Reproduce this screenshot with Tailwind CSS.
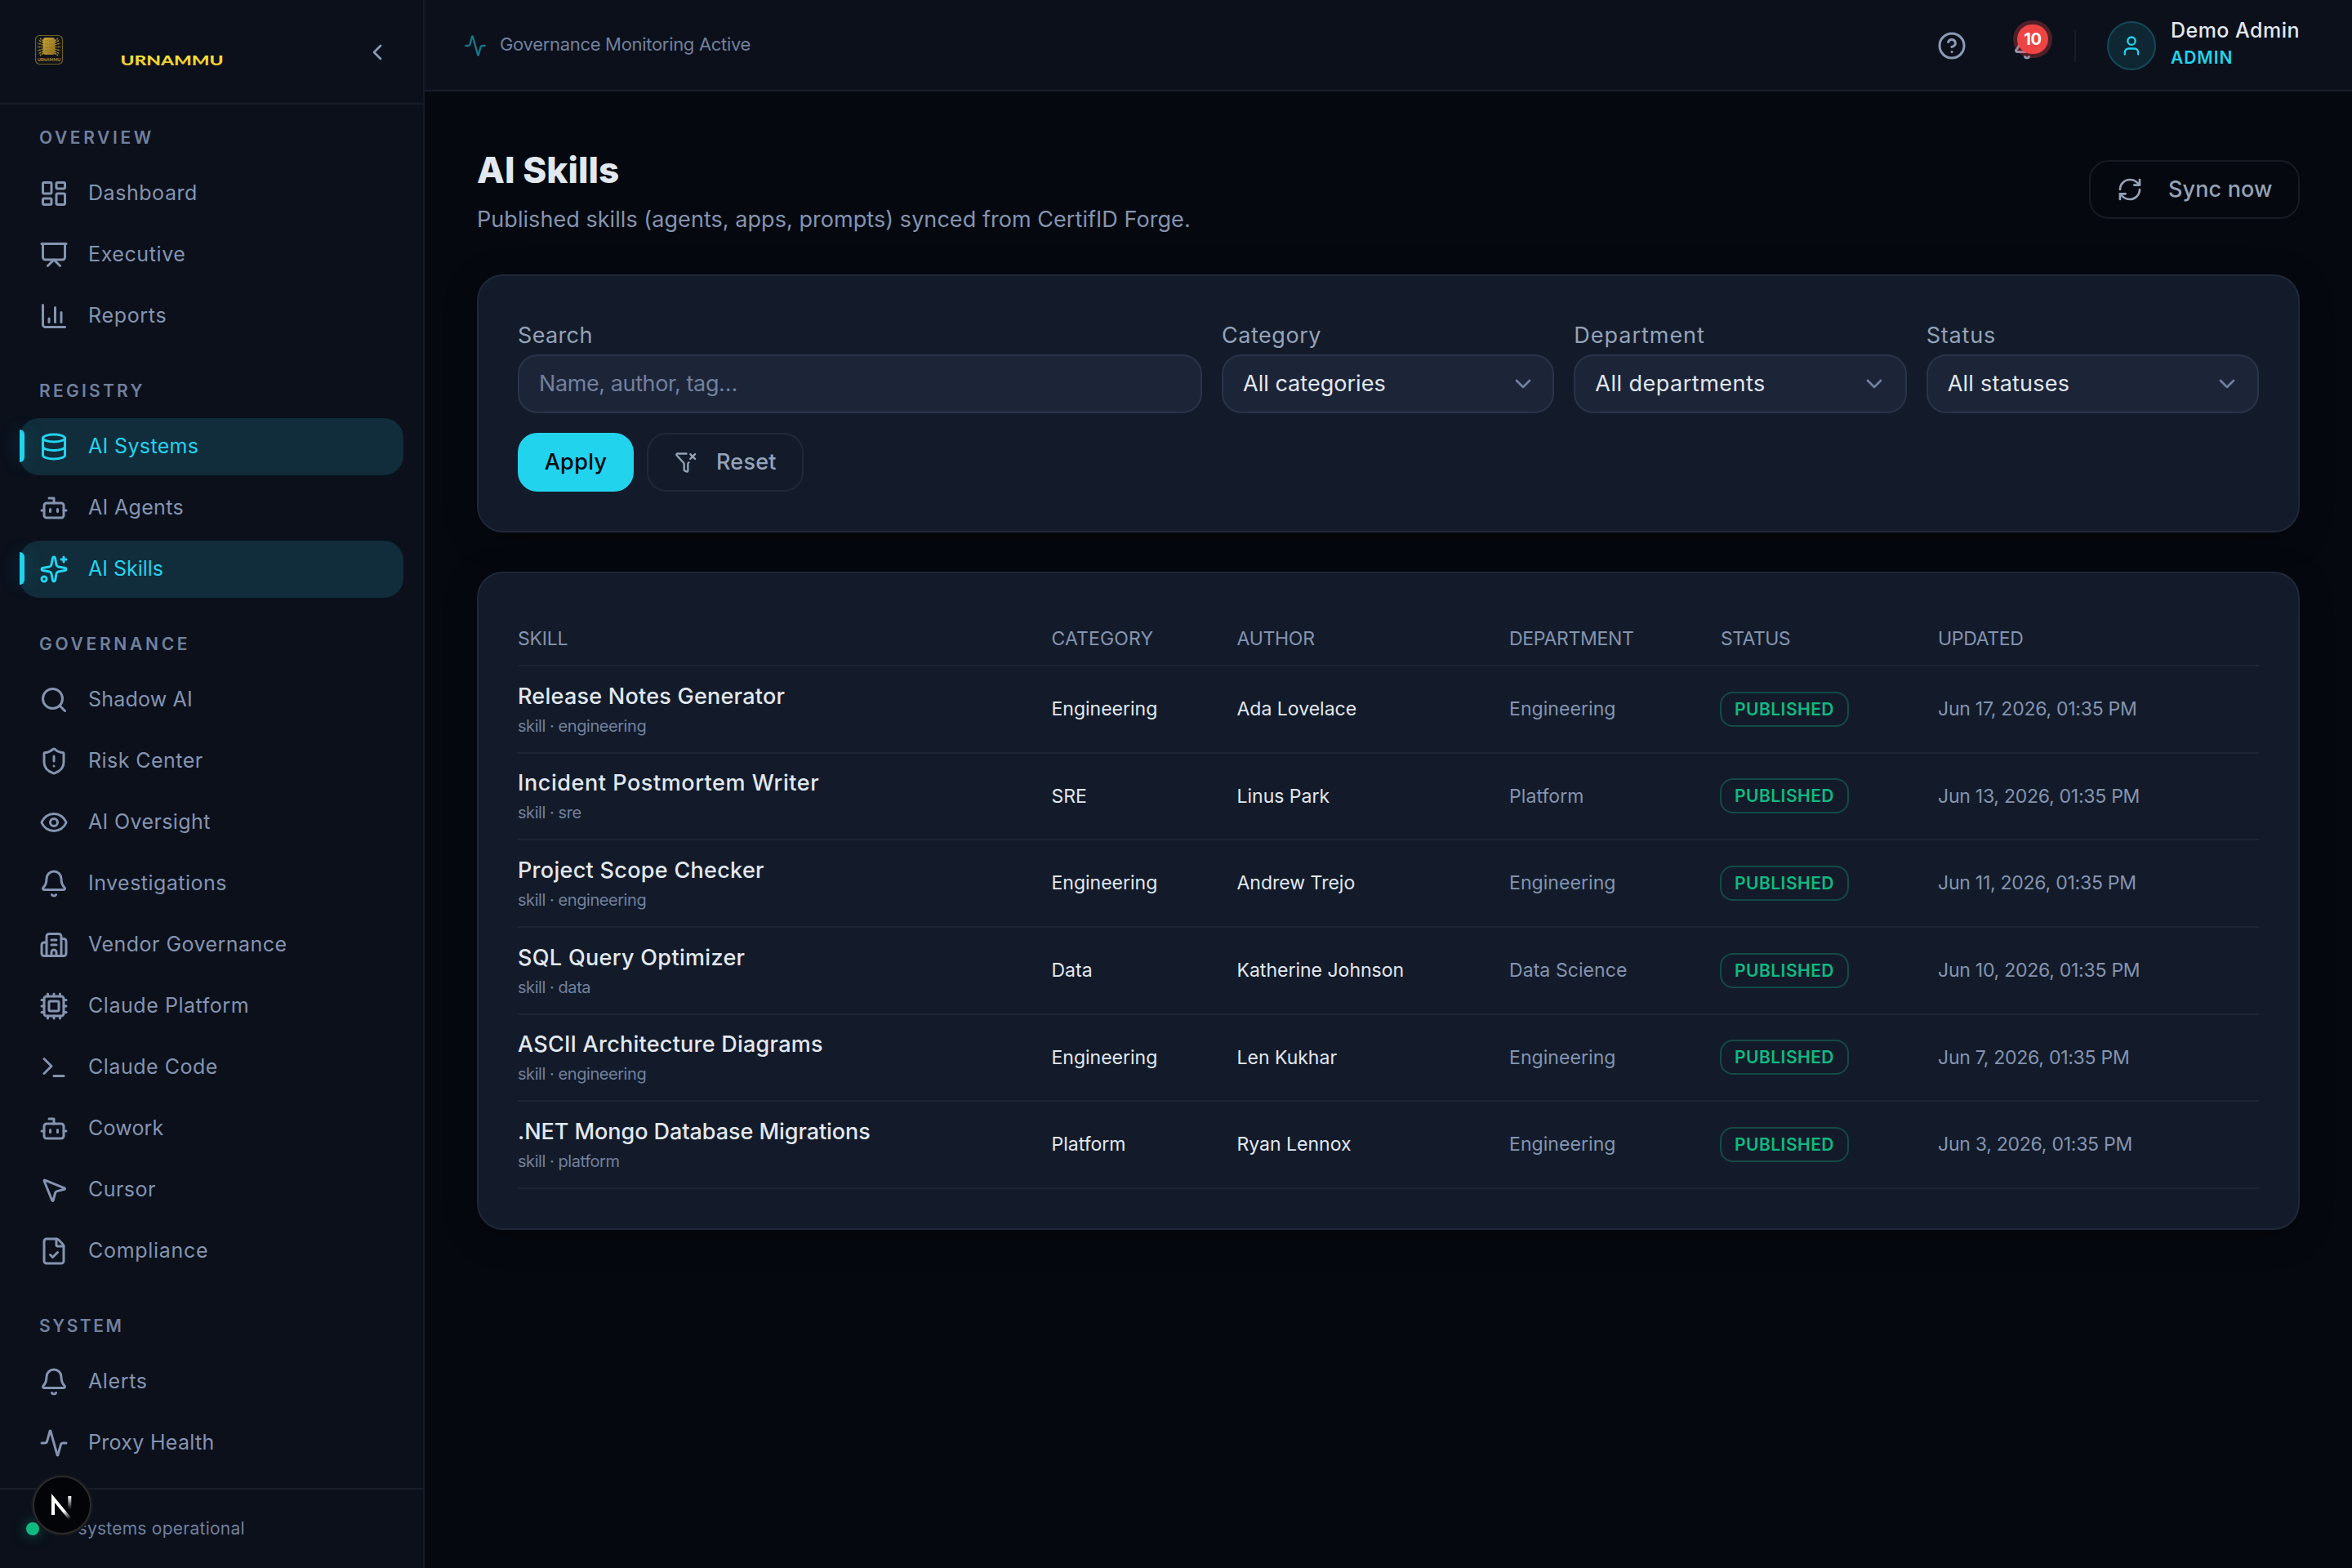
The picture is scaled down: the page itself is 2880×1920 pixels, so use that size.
<!DOCTYPE html>
<html lang="en">
<head>
<meta charset="utf-8">
<title>AI Skills</title>
<script src="https://cdn.jsdelivr.net/npm/@tailwindcss/browser@4"></script>
</head>
<body class="w-[2880px] h-[1920px] overflow-hidden bg-[#05080f] font-['Inter',sans-serif] text-[#e2e8f0]">

<!-- Icon sprite -->
<svg class="hidden" xmlns="http://www.w3.org/2000/svg">
  <symbol id="i-dashboard" viewBox="0 0 24 24"><rect width="7" height="9" x="3" y="3" rx="1"/><rect width="7" height="5" x="14" y="3" rx="1"/><rect width="7" height="9" x="14" y="12" rx="1"/><rect width="7" height="5" x="3" y="16" rx="1"/></symbol>
  <symbol id="i-executive" viewBox="0 0 24 24"><path d="M2 3h20"/><path d="M21 3v11a2 2 0 0 1-2 2H5a2 2 0 0 1-2-2V3"/><path d="m7 21 5-5 5 5"/></symbol>
  <symbol id="i-reports" viewBox="0 0 24 24"><path d="M3 3v16a2 2 0 0 0 2 2h16"/><path d="M18 17V9"/><path d="M13 17V5"/><path d="M8 17v-3"/></symbol>
  <symbol id="i-database" viewBox="0 0 24 24"><ellipse cx="12" cy="5" rx="9" ry="3"/><path d="M3 5V19A9 3 0 0 0 21 19V5"/><path d="M3 12A9 3 0 0 0 21 12"/></symbol>
  <symbol id="i-bot" viewBox="0 0 24 24"><path d="M12 8V4H8"/><rect width="16" height="12" x="4" y="8" rx="2"/><path d="M2 14h2"/><path d="M20 14h2"/><path d="M15 13v2"/><path d="M9 13v2"/></symbol>
  <symbol id="i-sparkles" viewBox="0 0 24 24"><path d="M11.017 2.814a1 1 0 0 1 1.966 0l1.051 5.558a2 2 0 0 0 1.594 1.594l5.558 1.051a1 1 0 0 1 0 1.966l-5.558 1.051a2 2 0 0 0-1.594 1.594l-1.051 5.558a1 1 0 0 1-1.966 0l-1.051-5.558a2 2 0 0 0-1.594-1.594l-5.558-1.051a1 1 0 0 1 0-1.966l5.558-1.051a2 2 0 0 0 1.594-1.594z"/><path d="M20 2v4"/><path d="M22 4h-4"/><circle cx="4" cy="20" r="2"/></symbol>
  <symbol id="i-search" viewBox="0 0 24 24"><path d="m21 21-4.340-4.340"/><circle cx="11" cy="11" r="8"/></symbol>
  <symbol id="i-shield" viewBox="0 0 24 24"><path d="M20 13c0 5-3.5 7.5-7.66 8.95a1 1 0 0 1-.67-.01C7.5 20.5 4 18 4 13V6a1 1 0 0 1 1-1c2 0 4.5-1.2 6.24-2.72a1.17 1.17 0 0 1 1.52 0C14.51 3.81 17 5 19 5a1 1 0 0 1 1 1z"/><path d="M12 8v4"/><path d="M12 16h.01"/></symbol>
  <symbol id="i-eye" viewBox="0 0 24 24"><path d="M2.062 12.348a1 1 0 0 1 0-.696 10.75 10.75 0 0 1 19.876 0 1 1 0 0 1 0 .696 10.75 10.75 0 0 1-19.876 0"/><circle cx="12" cy="12" r="3"/></symbol>
  <symbol id="i-bell" viewBox="0 0 24 24"><path d="M10.268 21a2 2 0 0 0 3.464 0"/><path d="M3.262 15.326A1 1 0 0 0 4 17h16a1 1 0 0 0 .74-1.673C19.41 13.956 18 12.499 18 8A6 6 0 0 0 6 8c0 4.499-1.411 5.956-2.738 7.326"/></symbol>
  <symbol id="i-building" viewBox="0 0 24 24"><path d="M10 12h4"/><path d="M10 8h4"/><path d="M14 21v-3a2 2 0 0 0-4 0v3"/><path d="M6 10H4a2 2 0 0 0-2 2v7a2 2 0 0 0 2 2h16a2 2 0 0 0 2-2V9a2 2 0 0 0-2-2h-2"/><path d="M6 21V5a2 2 0 0 1 2-2h8a2 2 0 0 1 2 2v16"/></symbol>
  <symbol id="i-cpu" viewBox="0 0 24 24"><path d="M12 20v2"/><path d="M12 2v2"/><path d="M17 20v2"/><path d="M17 2v2"/><path d="M2 12h2"/><path d="M2 17h2"/><path d="M2 7h2"/><path d="M20 12h2"/><path d="M20 17h2"/><path d="M20 7h2"/><path d="M7 20v2"/><path d="M7 2v2"/><rect x="4" y="4" width="16" height="16" rx="2"/><rect x="8" y="8" width="8" height="8" rx="1"/></symbol>
  <symbol id="i-terminal" viewBox="0 0 24 24"><path d="M12 19h8"/><path d="m4 17 6-6-6-6"/></symbol>
  <symbol id="i-cursor" viewBox="0 0 24 24"><path d="M4.037 4.688a.495.495 0 0 1 .651-.651l16 6.5a.5.5 0 0 1-.063.947l-6.124 1.58a2 2 0 0 0-1.438 1.435l-1.579 6.126a.5.5 0 0 1-.947.063z"/></symbol>
  <symbol id="i-filecheck" viewBox="0 0 24 24"><path d="M6 22a2 2 0 0 1-2-2V4a2 2 0 0 1 2-2h8a2.4 2.4 0 0 1 1.704.706l3.588 3.588A2.4 2.4 0 0 1 20 8v12a2 2 0 0 1-2 2z"/><path d="M14 2v5a1 1 0 0 0 1 1h5"/><path d="m9 15 2 2 4-4"/></symbol>
  <symbol id="i-activity" viewBox="0 0 24 24"><path d="M22 12h-2.48a2 2 0 0 0-1.93 1.46l-2.35 8.36a.25.25 0 0 1-.48 0L9.24 2.18a.25.25 0 0 0-.48 0l-2.35 8.36A2 2 0 0 1 4.49 12H2"/></symbol>
  <symbol id="i-chevleft" viewBox="0 0 24 24"><path d="m15 18-6-6 6-6"/></symbol>
  <symbol id="i-chevdown" viewBox="0 0 24 24"><path d="m6 9 6 6 6-6"/></symbol>
  <symbol id="i-help" viewBox="0 0 24 24"><circle cx="12" cy="12" r="10"/><path d="M9.09 9a3 3 0 0 1 5.83 1c0 2-3 3-3 3"/><path d="M12 17h.01"/></symbol>
  <symbol id="i-user" viewBox="0 0 24 24"><path d="M19 21v-2a4 4 0 0 0-4-4H9a4 4 0 0 0-4 4v2"/><circle cx="12" cy="7" r="4"/></symbol>
  <symbol id="i-refresh" viewBox="0 0 24 24"><path d="M3 12a9 9 0 0 1 9-9 9.75 9.75 0 0 1 6.74 2.74L21 8"/><path d="M21 3v5h-5"/><path d="M21 12a9 9 0 0 1-9 9 9.75 9.75 0 0 1-6.74-2.74L3 16"/><path d="M8 16H3v5"/></symbol>
  <symbol id="i-filterx" viewBox="0 0 24 24"><path d="M12.531 3H3a1 1 0 0 0-.742 1.67l7.225 7.989A2 2 0 0 1 10 14v6a1 1 0 0 0 .553.895l2 1A1 1 0 0 0 14 21v-7a2 2 0 0 1 .517-1.341l.427-.473"/><path d="m16.5 3.5 5 5"/><path d="m21.5 3.5-5 5"/></symbol>
</svg>

<div class="relative flex h-[1920px] w-[2880px]">

  <!-- Sidebar -->
  <aside class="flex h-full w-[520px] shrink-0 flex-col border-r-2 border-[#151c27] bg-[#0b101b]">
    <div class="flex h-32 shrink-0 items-center border-b-2 border-[#171d29] pl-[42px] pr-10">
      <svg class="-mt-1 h-[38px] w-9 overflow-visible" viewBox="0 0 36 38">
        <defs>
          <linearGradient id="tablet" x1="0" y1="0" x2="1" y2="1"><stop offset="0" stop-color="#c9a437"/><stop offset="1" stop-color="#8f7020"/></linearGradient>
          <linearGradient id="wordmark" x1="0" y1="0" x2="0" y2="1"><stop offset="0" stop-color="#fbf03a"/><stop offset="1" stop-color="#e8b92c"/></linearGradient>
        </defs>
        <rect x="1.5" y="1.5" width="33" height="35" rx="5" fill="#10131a" stroke="#6f6026" stroke-width="1.2"/>
        <g stroke="#9c832c" stroke-width="1.6" stroke-dasharray="2.500 .8">
          <path d="M11 8 7 5M11 10.500 5 7M11 13 4 11M11 15.500H3.500M11 18l-7 2M11 20.500l-6 3.500M11 23l-4 3M25 8l4-3M25 10.500 31 7M25 13l7-2M25 15.500h7.500M25 18l7 2M25 20.500l6 3.500M25 23l4 3"/>
        </g>
        <rect x="11" y="4" width="14" height="21" rx="2.500" fill="url(#tablet)"/>
        <path d="M13 8h10M13 12h10M13 16h10M13 20h10" stroke="#80651c" stroke-width=".8" stroke-dasharray="1.500 1"/>
        <text x="4" y="32.500" textLength="28" lengthAdjust="spacingAndGlyphs" font-family="Lato, sans-serif" font-weight="700" font-size="6" fill="#b0963c">URNAMMU</text>
      </svg>
      <svg class="ml-[66px] mt-[22px] h-6 w-[136px]" viewBox="0 0 136 24">
        <text x="3.500" y="18" textLength="126" lengthAdjust="spacingAndGlyphs" font-family="Lato, sans-serif" font-weight="900" font-size="16.500" fill="url(#wordmark)">URNAMMU</text>
      </svg>
      <svg class="ml-auto mt-0.5 size-8 fill-none stroke-[#8b9ab5] stroke-2 [stroke-linecap:round] [stroke-linejoin:round]"><use href="#i-chevleft"/></svg>
    </div>

    <nav class="min-h-0 flex-1 overflow-hidden px-6 pt-6 text-[25px] text-[#8494b0] [&_svg]:size-9 [&_svg]:shrink-0 [&_svg]:fill-none [&_svg]:stroke-current [&_svg]:stroke-2 [&_svg]:[stroke-linecap:round] [&_svg]:[stroke-linejoin:round] [&_h2]:h-[50px] [&_h2]:pl-6 [&_h2]:text-[21px] [&_h2]:leading-[33px] [&_h2]:font-semibold [&_h2]:text-[#71809d] [&_a]:relative [&_a]:flex [&_a]:h-[70px] [&_a]:items-center [&_a]:gap-6 [&_a]:rounded-3xl [&_a]:pl-6">
      <section class="mb-10">
        <h2 class="tracking-[.172em]">OVERVIEW</h2>
        <div class="flex flex-col gap-[5px]">
          <a class="tracking-[.022em]"><svg><use href="#i-dashboard"/></svg>Dashboard</a>
          <a class="tracking-[.024em]"><svg><use href="#i-executive"/></svg>Executive</a>
          <a class="tracking-[.027em]"><svg><use href="#i-reports"/></svg>Reports</a>
        </div>
      </section>
      <section class="mb-10">
        <h2 class="tracking-[.155em]">REGISTRY</h2>
        <div class="flex flex-col gap-[5px]">
          <a class="bg-[#112c3a] tracking-[.014em] text-[#22d3ee]"><span class="absolute left-0 top-[14px] h-10 w-1.5 rounded-r-md bg-[#22d3ee] shadow-[0_0_24px_rgba(34,211,238,0.3)]"></span><svg><use href="#i-database"/></svg>AI Systems</a>
          <a class="tracking-[.013em]"><svg><use href="#i-bot"/></svg>AI Agents</a>
          <a class="bg-[#112c3a] tracking-[-.001em] text-[#22d3ee]"><span class="absolute left-0 top-[14px] h-10 w-1.5 rounded-r-md bg-[#22d3ee] shadow-[0_0_24px_rgba(34,211,238,0.3)]"></span><svg><use href="#i-sparkles"/></svg>AI Skills</a>
        </div>
      </section>
      <section class="mb-10">
        <h2 class="tracking-[.177em]">GOVERNANCE</h2>
        <div class="flex flex-col gap-[5px]">
          <a class="tracking-[.008em]"><svg><use href="#i-search"/></svg>Shadow AI</a>
          <a class="tracking-[.018em]"><svg><use href="#i-shield"/></svg>Risk Center</a>
          <a class="tracking-[.015em]"><svg><use href="#i-eye"/></svg>AI Oversight</a>
          <a class="tracking-[.019em]"><svg><use href="#i-bell"/></svg>Investigations</a>
          <a class="tracking-[.019em]"><svg><use href="#i-building"/></svg>Vendor Governance</a>
          <a class="tracking-[.022em]"><svg><use href="#i-cpu"/></svg>Claude Platform</a>
          <a class="tracking-[.021em]"><svg><use href="#i-terminal"/></svg>Claude Code</a>
          <a class="tracking-[.008em]"><svg><use href="#i-bot"/></svg>Cowork</a>
          <a class="tracking-[.018em]"><svg><use href="#i-cursor"/></svg>Cursor</a>
          <a class="tracking-[.028em]"><svg><use href="#i-filecheck"/></svg>Compliance</a>
        </div>
      </section>
      <section>
        <h2 class="tracking-[.12em]">SYSTEM</h2>
        <div class="flex flex-col gap-[5px]">
          <a class="tracking-[.025em]"><svg><use href="#i-bell"/></svg>Alerts</a>
          <a class="tracking-[.012em]"><svg><use href="#i-activity"/></svg>Proxy Health</a>
        </div>
      </section>
    </nav>

    <div class="flex h-[98px] shrink-0 items-center gap-4 border-t-2 border-[#171d29] pl-8 text-[21px] tracking-[.012em] text-[#71809d]">
      <span class="size-4 rounded-full bg-[#10b981] shadow-[0_0_16px_rgba(16,185,129,0.5)]"></span>
      <span>All systems operational</span>
    </div>
  </aside>

  <div class="flex min-w-0 flex-1 flex-col">
    <!-- Top bar -->
    <header class="flex h-28 shrink-0 items-center border-b-2 border-[#171d29] bg-[#0b101b] pl-12 pr-16 pt-0.5">
      <svg class="size-7 fill-none stroke-[#16788a] stroke-2 [stroke-linecap:round] [stroke-linejoin:round]"><use href="#i-activity"/></svg>
      <span class="-mt-[3px] ml-4 text-[22px] tracking-[-.014em] text-[#71809d]">Governance Monitoring Active</span>
      <div class="ml-auto flex items-center">
        <svg class="size-9 fill-none stroke-[#8b9ab5] stroke-2 [stroke-linecap:round] [stroke-linejoin:round]"><use href="#i-help"/></svg>
        <div class="relative ml-14 size-9">
          <svg class="size-9 fill-none stroke-[#8b9ab5] stroke-2 [stroke-linecap:round] [stroke-linejoin:round]"><use href="#i-bell"/></svg>
          <span class="absolute left-1.5 -top-2 flex h-9 w-[38px] items-center justify-center rounded-full bg-[#ef4444] text-[20px] font-bold tracking-[-.02em] text-white shadow-[0_0_0_5px_rgba(239,68,68,0.3)]">10</span>
        </div>
        <span class="ml-10 h-10 w-0.5 bg-[#171d29]"></span>
        <span class="ml-[38px] flex size-[60px] items-center justify-center rounded-full border-2 border-[#134a59] bg-[#0f2733]">
          <svg class="size-7 fill-none stroke-[#22d3ee] stroke-2 [stroke-linecap:round] [stroke-linejoin:round]"><use href="#i-user"/></svg>
        </span>
        <div class="ml-[18px] w-[158px] pb-[5px]">
          <div class="whitespace-nowrap text-[25px] leading-[34px] font-medium tracking-[.019em]">Demo Admin</div>
          <div class="text-[21px] leading-[33px] font-semibold tracking-[.045em] text-[#22d3ee]">ADMIN</div>
        </div>
      </div>
    </header>

    <main class="min-h-0 flex-1 px-16 pt-16 text-[27px]">
      <div class="mb-12 flex h-28 items-center justify-between">
        <div>
          <h1 class="text-[44px] leading-[64px] font-extrabold tracking-[.001em]">AI Skills</h1>
          <p class="mt-2 h-10 leading-[41px] tracking-[.002em] text-[#8494b0]">Published skills (agents, apps, prompts) synced from CertifID Forge.</p>
        </div>
        <button class="flex h-[72px] w-[258px] items-center rounded-3xl border-2 border-[#161b26] pl-8 font-medium tracking-[.005em] text-[#94a3b8]">
          <svg class="mr-[31px] size-8 fill-none stroke-current stroke-2 [stroke-linecap:round] [stroke-linejoin:round]"><use href="#i-refresh"/></svg>Sync now
        </button>
      </div>

      <!-- Filters -->
      <section class="mb-12 h-[316px] rounded-[32px] border-2 border-[#1f2838] bg-[#131b2a] p-12 shadow-[0_8px_40px_rgba(0,0,0,0.3)]">
        <div class="grid grid-cols-[838px_1fr_1fr_1fr] gap-6">
          <label class="text-[#94a3b8]"><span class="block h-12 leading-[49px] tracking-[.013em]">Search</span>
            <span class="flex h-[72px] items-center rounded-3xl border-2 border-[#2a3448] bg-[#1c2438] px-6 tracking-[-.015em] text-[#71809d]">Name, author, tag…</span></label>
          <label class="text-[#94a3b8]"><span class="block h-12 leading-[49px] tracking-[.02em]">Category</span>
            <span class="flex h-[72px] items-center justify-between rounded-3xl border-2 border-[#2a3448] bg-[#1c2438] pl-6 pr-5 tracking-[.001em] text-[#e2e8f0]">All categories<svg class="size-8 fill-none stroke-[#71809d] stroke-2 [stroke-linecap:round] [stroke-linejoin:round]"><use href="#i-chevdown"/></svg></span></label>
          <label class="text-[#94a3b8]"><span class="block h-12 leading-[49px] tracking-[.036em]">Department</span>
            <span class="flex h-[72px] items-center justify-between rounded-3xl border-2 border-[#2a3448] bg-[#1c2438] pl-6 pr-[22px] tracking-[.018em] text-[#e2e8f0]">All departments<svg class="size-8 fill-none stroke-[#71809d] stroke-2 [stroke-linecap:round] [stroke-linejoin:round]"><use href="#i-chevdown"/></svg></span></label>
          <label class="text-[#94a3b8]"><span class="block h-12 leading-[49px] tracking-[.03em]">Status</span>
            <span class="flex h-[72px] items-center justify-between rounded-3xl border-2 border-[#2a3448] bg-[#1c2438] pl-6 pr-[21px] tracking-[.009em] text-[#e2e8f0]">All statuses<svg class="size-8 fill-none stroke-[#71809d] stroke-2 [stroke-linecap:round] [stroke-linejoin:round]"><use href="#i-chevdown"/></svg></span></label>
        </div>
        <div class="mt-6 flex gap-4 font-medium">
          <button class="h-[72px] w-[142px] rounded-3xl bg-[#22d3ee] tracking-[.012em] text-[#060a12]">Apply</button>
          <button class="flex h-[72px] w-48 items-center rounded-3xl border-2 border-[#202939] pl-8 tracking-[.008em] text-[#94a3b8]"><svg class="mr-[23px] size-7 fill-none stroke-current stroke-2 [stroke-linecap:round] [stroke-linejoin:round]"><use href="#i-filterx"/></svg>Reset</button>
        </div>
      </section>

      <!-- Skills table -->
      <section class="h-[806px] rounded-[32px] border-2 border-[#1f2838] bg-[#131b2a] p-12 shadow-[0_8px_40px_rgba(0,0,0,0.3)]">
        <table class="w-full table-fixed border-collapse text-left text-[23px] [&_td]:p-0 [&_th]:p-0 [&_th]:font-normal [&_tr]:border-b-2 [&_tr]:border-[#1d2534]">
          <colgroup><col class="w-[653.5px]"><col class="w-[227px]"><col class="w-[333.5px]"><col class="w-[259px]"><col class="w-[266px]"><col></colgroup>
          <thead>
            <tr class="h-[65px] text-[#8494b0]"><th class="tracking-[-.01em]">SKILL</th><th class="tracking-[.006em]">CATEGORY</th><th class="tracking-[-.012em]">AUTHOR</th><th class="tracking-[-.014em]">DEPARTMENT</th><th class="tracking-[-.024em]">STATUS</th><th class="tracking-[-.014em]">UPDATED</th></tr>
          </thead>
          <tbody id="rows"></tbody>
        </table>
      </section>
    </main>
  </div>

  <!-- Dev tools indicator -->
  <div class="absolute left-10 top-[1807px] flex size-[72px] items-center justify-center rounded-full border-2 border-[#2b2b2c] bg-[#030407] shadow-[0_0_0_2px_#15171b]">
    <svg class="size-10 fill-none" viewBox="0 0 40 40">
      <defs>
        <linearGradient id="n-diag" gradientUnits="userSpaceOnUse" x1="24" y1="26" x2="31" y2="36"><stop offset="0" stop-color="#fff"/><stop offset="1" stop-color="#fff" stop-opacity="0"/></linearGradient>
        <linearGradient id="n-stem" gradientUnits="userSpaceOnUse" x1="29" y1="9" x2="29" y2="25"><stop offset="0" stop-color="#fff"/><stop offset="1" stop-color="#fff" stop-opacity="0"/></linearGradient>
      </defs>
      <path d="M9 32V11.500L30 37" stroke="url(#n-diag)" stroke-width="4"/>
      <path d="M29.300 9v16" stroke="url(#n-stem)" stroke-width="4"/>
    </svg>
  </div>
</div>

<script>
  const skills = [
    ["Release Notes Generator", "tracking-[.009em]", "engineering", "Engineering", "Ada Lovelace", "Engineering", "Jun 17"],
    ["Incident Postmortem Writer", "tracking-[.021em]", "sre", "SRE", "Linus Park", "Platform", "Jun 13"],
    ["Project Scope Checker", "tracking-[.011em]", "engineering", "Engineering", "Andrew Trejo", "Engineering", "Jun 11"],
    ["SQL Query Optimizer", "tracking-[.012em]", "data", "Data", "Katherine Johnson", "Data Science", "Jun 10"],
    ["ASCII Architecture Diagrams", "tracking-[.009em]", "engineering", "Engineering", "Len Kukhar", "Engineering", "Jun 7"],
    [".NET Mongo Database Migrations", "tracking-[-.002em]", "platform", "Platform", "Ryan Lennox", "Engineering", "Jun 3"],
  ];
  document.getElementById("rows").innerHTML = skills.map(([name, track, tag, category, author, dept, date]) => `
    <tr class="h-[106.66px]">
      <td><div class="text-[27px] leading-[42px] font-medium ${track}">${name}</div><div class="text-[20px] leading-[31px] tracking-[-.022em] text-[#71809d]">skill · ${tag}</div></td>
      <td>${category}</td>
      <td>${author}</td>
      <td class="tracking-[.003em] text-[#8494b0]">${dept}</td>
      <td><span class="-ml-px flex h-[43px] w-[158px] items-center justify-center rounded-2xl border-2 border-[#144a45] text-[21px] font-semibold tracking-[.022em] text-[#10b981]">PUBLISHED</span></td>
      <td class="tracking-[-.011em] text-[#8494b0]">${date}, 2026, 01:35 PM</td>
    </tr>`).join("");
</script>
</body>
</html>
